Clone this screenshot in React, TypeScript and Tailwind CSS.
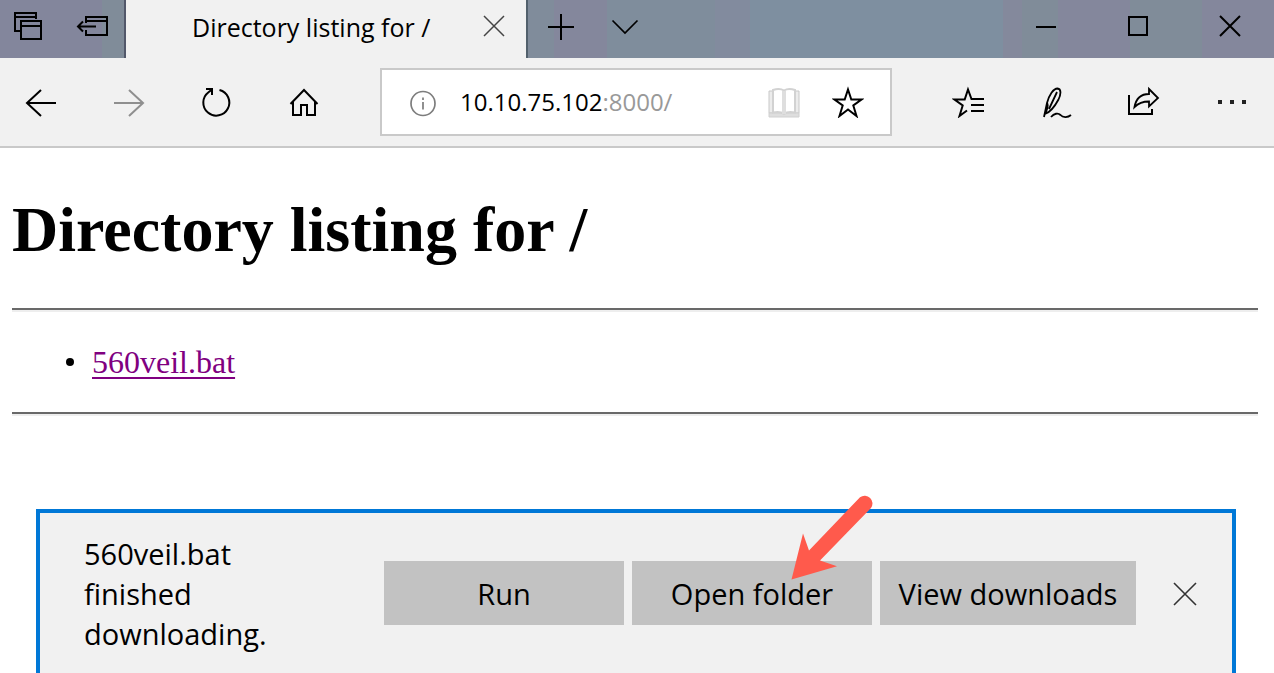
import type { ReactNode } from "react";

type IconProps = { children: ReactNode; className?: string };

function Icon({ children, className = "" }: IconProps) {
  return (
    <svg
      viewBox="0 0 32 32"
      aria-hidden="true"
      fill="none"
      stroke="currentColor"
      strokeWidth="2"
      className={`size-8 shrink-0 ${className}`}
    >
      {children}
    </svg>
  );
}

function IconButton({ label, children, className = "" }: IconProps & { label: string }) {
  return (
    <button type="button" aria-label={label} className={`size-8 shrink-0 ${className}`}>
      <Icon>{children}</Icon>
    </button>
  );
}

function TitleBar() {
  return (
    <header className="flex h-[58px] shrink-0 bg-[#7f8d9c]">
      <div className="flex w-[126px] shrink-0 items-center gap-8 border-r-2 border-[#52586a] bg-[linear-gradient(90deg,#83869c_102px,#808c99_102px)] pb-1 pl-3">
        <IconButton label="Tabs you've set aside">
          <path d="M8 20H3V2H24V8M3 6H24M9 10H29V28H9ZM9 15H29" />
        </IconButton>
        <IconButton label="Set these tabs aside">
          <path d="M10 12V6H31V24H10V19M10 10H31M2 15.500H20M7 10.500L2 15.500L7 20.500" />
        </IconButton>
      </div>
      <div className="flex w-[400px] items-center bg-[#f1f1f1] pr-4 pb-1 pl-[66px] text-black">
        <h2 className="flex-1 whitespace-nowrap text-[25px] leading-8">Directory listing for /</h2>
        <IconButton label="Close tab" className="text-[#444]">
          <path d="M6 5L26 25M26 5L6 25" strokeWidth="1.500" />
        </IconButton>
      </div>
      <div className="flex flex-1 items-center border-l-2 border-[#52606c] bg-[linear-gradient(90deg,#808c9b_26px,#84879c_26px,#84879c_79px,#7f8d9c_79px,#7f8d9c_187px,#828b9e_187px,#828b9e_222px,#7e8fa0_222px,#7e8fa0_475px,#84899c_475px,#84899c_494px,#808c99_494px,#808c99_530px,#84879c_530px,#84879c_602px,#808c99_602px,#808c99_674px,#84879c_674px)] pr-7 pb-1 pl-[17px]">
        <div className="flex flex-1 gap-8">
          <IconButton label="New tab">
            <path d="M16 3V29M3 16H29" />
          </IconButton>
          <IconButton label="Show tab previews">
            <path d="M3.500 9.500L16 22L28.500 9.500" strokeWidth="1.700" />
          </IconButton>
        </div>
        <div className="flex gap-[60px]">
          <IconButton label="Minimize">
            <path d="M6 16H26" />
          </IconButton>
          <IconButton label="Maximize">
            <path d="M7 6H25V24H7Z" />
          </IconButton>
          <IconButton label="Close window">
            <path d="M6 5L26 25M26 5L6 25" />
          </IconButton>
        </div>
      </div>
    </header>
  );
}

function Toolbar() {
  return (
    <nav className="flex h-[90px] shrink-0 items-center border-b-2 border-[#c9c9c9] bg-[#f1f1f1] pr-[26px] pl-[25px]">
      <div className="flex gap-14">
        <IconButton label="Back">
          <path d="M31 17H2M16 4L2 17L16 30" />
        </IconButton>
        <IconButton label="Forward" className="text-[#8f8f8f]">
          <path d="M1 17H30M16 4L30 17L16 30" />
        </IconButton>
        <IconButton label="Refresh">
          <path d="M18.500 4A13 13 0 1 1 7.500 6.200L11 3.500M5 3H11V9" />
        </IconButton>
        <IconButton label="Home">
          <path d="M1.500 18L15 4L28.500 18M4 16V29H12V19H18V29H26V16" />
        </IconButton>
      </div>

      <div className="mr-[60px] ml-[59px] flex h-[68px] flex-1 items-center border-2 border-[#c9c9c9] bg-white pr-[26px] pl-[25px]">
        <Icon className="text-[#7d7d7d]">
          <circle cx="16" cy="17.500" r="12" strokeWidth="1.700" />
          <path d="M16 16V23.500M16 11.500V14" strokeWidth="1.700" />
        </Icon>
        <label className="flex flex-1 items-center pl-[21px] text-2xl leading-9">
          <input
            type="text"
            aria-label="Address"
            defaultValue="10.10.75.102"
            className="field-sizing-content h-9 bg-transparent text-black outline-none"
          />
          <span className="text-[#999]">:8000/</span>
        </label>
        <div className="flex gap-8">
          <IconButton label="Reading view">
            <path d="M1 5H5V27H1Z M27 5H31V27H27Z" fill="#ececec" stroke="#c8c8c8" strokeWidth="1" />
            <path d="M1 27H31V31H1Z" fill="#dedede" stroke="#d0d0d0" strokeWidth="1" />
            <path
              d="M5 4C9 2.500 13 2.500 16 4.500C19 2.500 23 2.500 27 4V26.500C23 25.500 19 25.500 16 28C13 25.500 9 25.500 5 26.500Z"
              fill="#fff"
              stroke="#d2d2d2"
              strokeWidth="2"
            />
            <path d="M16 5V28" stroke="#dedede" strokeWidth="4" />
          </IconButton>
          <IconButton label="Add to favorites">
            <path d="M16 3.500L19.300 13.500H29.500L21.300 19.500L24.500 30L16 23.500L7.500 30L10.700 19.500L2.500 13.500H12.700Z" />
          </IconButton>
        </div>
      </div>

      <div className="flex gap-14">
        <IconButton label="Hub">
          <path d="M32 13H19.500L16 3.500L12.700 13.500H2.500L10.700 19.500L7.500 30L15 24.500M19 19H32M19 25H32" />
        </IconButton>
        <IconButton label="Add notes">
          <path
            d="M4 31L7 17C9 9 13.500 2.500 17.500 2.500C21.500 3 21 8 18.500 13.500C15 20 11 26 5 28M7 17C8.500 19 7.500 23 5 28M9 23L17 6M11 31C14 27.500 18 26.500 20.500 29C23 32 28 31.500 31 29"
            strokeWidth="1.800"
          />
        </IconButton>
        <IconButton label="Share">
          <path d="M1 9V28H24V23" />
          <path d="M21 3L30 12L21 20.500V15.500C14 15.500 10 17.500 6.500 21C8 13 13 8 21 8Z" strokeWidth="1.800" />
        </IconButton>
        <IconButton label="Settings and more">
          <path d="M2 16H6M14 16H18M26 16H30" strokeWidth="4" stroke="#222" />
        </IconButton>
      </div>
    </nav>
  );
}

function Listing() {
  const rule = "h-1 border-t-2 border-b-2 border-t-[#696969] border-b-[#eee]";
  return (
    <main className="shrink-0 pt-[45px] pr-4 pl-3 font-['Liberation_Serif',serif] text-black">
      <h1 className="mb-[41px] text-[64px] leading-[74px] font-bold">Directory listing for /</h1>
      <hr className={rule} />
      <ul className="my-8 pl-[54px] text-[32px] leading-9">
        <li className="flex items-center gap-[18px] before:size-2 before:rounded-full before:bg-black">
          <a href="#560veil.bat" className="text-[#800080] underline decoration-2 underline-offset-4">
            560veil.bat
          </a>
        </li>
      </ul>
      <hr className={rule} />
    </main>
  );
}

function DownloadBar() {
  const action = "h-16 bg-[#c2c2c2] pt-0.5 whitespace-nowrap text-black";
  return (
    <section
      aria-label="Download"
      className="mt-[93px] mr-[38px] ml-9 flex h-[168px] shrink-0 items-center border-4 border-[#0078d7] bg-[#f1f1f1] pr-[31px] pl-11 text-[29px] leading-10 text-black"
    >
      <p className="flex-1 pt-0.5 pr-24">560veil.bat finished downloading.</p>
      <div className="flex shrink-0 gap-2">
        <button type="button" className={`${action} w-60`}>
          Run
        </button>
        <div className="relative">
          <button type="button" className={`${action} w-60`}>
            Open folder
          </button>
          <svg
            viewBox="0 0 84 88"
            aria-hidden="true"
            className="pointer-events-none absolute -top-[67px] left-[158px] h-[88px] w-[84px]"
            fill="#ff5a4c"
          >
            <path d="M1.500 85.500L13 39.500L19 56.500L70 3.200A7.800 7.800 0 0 1 81 14L30 66.500L47 72.300Z" />
          </svg>
        </div>
        <button type="button" className={`${action} w-64`}>
          View downloads
        </button>
      </div>
      <IconButton label="Dismiss" className="ml-[33px] text-[#333]">
        <path d="M5 6L27 28M27 6L5 28" strokeWidth="1.600" />
      </IconButton>
    </section>
  );
}

export default function App() {
  return (
    <div className="flex h-screen flex-col overflow-hidden bg-white font-['Open_Sans',sans-serif] text-black">
      <TitleBar />
      <Toolbar />
      <Listing />
      <DownloadBar />
    </div>
  );
}
